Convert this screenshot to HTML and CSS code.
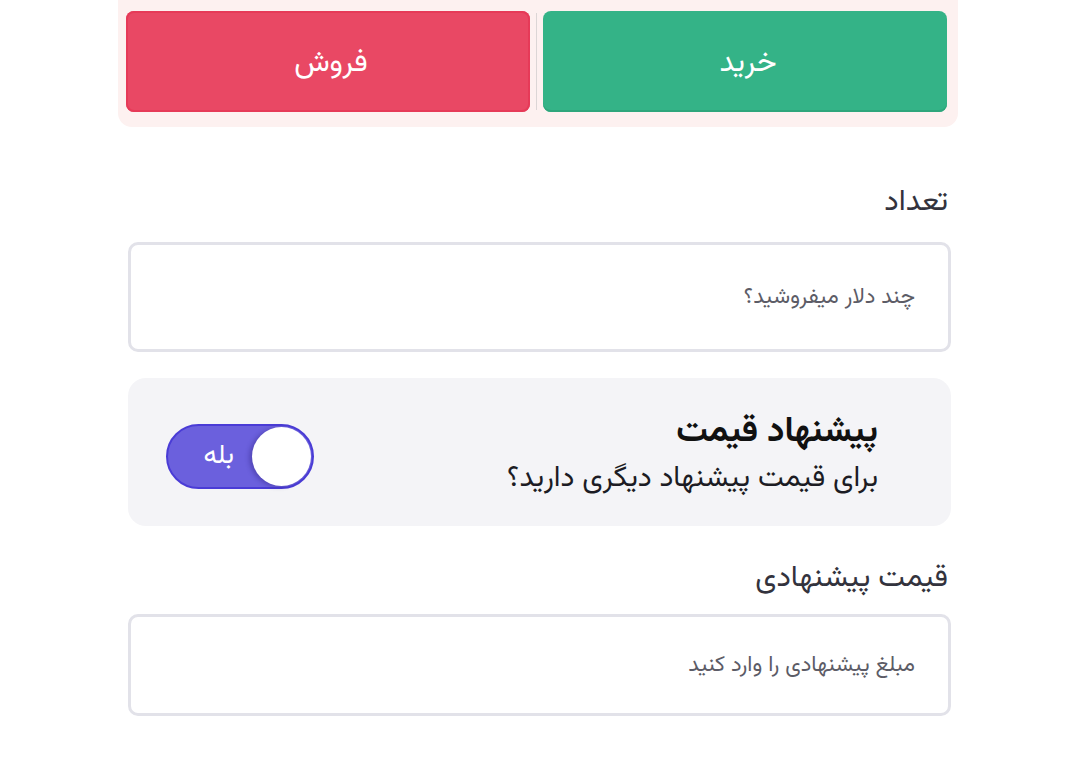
FILE: index.html
```html
<!DOCTYPE html>
<html lang="fa" dir="rtl">
<head>
<meta charset="UTF-8">
<meta name="viewport" content="width=device-width, initial-scale=1.0">
<title>سفارش دلار</title>
<link rel="stylesheet" href="styles.css">
</head>
<body>
<div class="order-page">
    <div class="trade-tabs">
        <button class="tab tab-buy">خرید</button>
        <span class="tab-divider"></span>
        <button class="tab tab-sell">فروش</button>
    </div>

    <form class="order-form">
        <label class="field-label" for="amount">تعداد</label>
        <input class="field-input" type="text" id="amount" placeholder="چند دلار میفروشید؟">

        <div class="offer-card">
            <div class="offer-text">
                <div class="offer-title">پیشنهاد قیمت</div>
                <div class="offer-desc">برای قیمت پیشنهاد دیگری دارید؟</div>
            </div>
            <div class="toggle">
                <span class="toggle-knob"></span>
                <span class="toggle-label">بله</span>
            </div>
        </div>

        <label class="field-label" for="price">قیمت پیشنهادی</label>
        <input class="field-input field-input-sm" type="text" id="price" placeholder="مبلغ پیشنهادی را وارد کنید">
    </form>
</div>
</body>
</html>
```

FILE: styles.css
```css
body {
    margin: 0;
    background-color: #fff;
    font-family: "Vazirmatn", "Noto Sans Arabic", "DejaVu Sans", sans-serif;
    color: #2a2a35;
}
.order-page {
    width: 840px;
    margin-right: 122px;
}
.trade-tabs {
    display: flex;
    align-items: stretch;
    gap: 6px;
    background-color: #fdf1f0;
    padding: 11px 11px 15px 8px;
    border-radius: 0 0 14px 14px;
}
.tab {
    flex: 1;
    height: 101px;
    padding: 3px 0 0 6px;
    border: none;
    border-radius: 8px;
    color: #fff;
    font-family: inherit;
    font-size: 30px;
}
.tab-buy {
    background-color: #34b387;
    box-shadow: inset 0 -2px 0 #2ea67c;
}
.tab-sell {
    background-color: #e94864;
    box-shadow: inset 0 0 0 2px #e63a58;
}
.tab-divider {
    width: 1px;
    margin: 2px 0;
    background-color: #dcd6d6;
}
.order-form {
    display: flex;
    flex-direction: column;
    width: 823px;
    margin-right: 7px;
}
.field-label {
    font-size: 30px;
    line-height: 40px;
    margin: 56px 3px 19px 0;
    color: #33333d;
}
.field-input {
    height: 110px;
    box-sizing: border-box;
    border: 3px solid #e2e2e9;
    border-radius: 10px;
    padding: 0 33px;
    font-family: inherit;
    font-size: 22px;
    color: #333;
    outline: none;
}
.field-input::placeholder {
    color: #5c5c66;
}
.field-input-sm {
    height: 102px;
}
.offer-card + .field-label {
    margin-top: 33px;
    margin-bottom: 15px;
}
.offer-card {
    display: flex;
    justify-content: space-between;
    align-items: center;
    margin-top: 26px;
    height: 148px;
    box-sizing: border-box;
    padding: 8px 73px 0 38px;
    background-color: #f4f4f7;
    border-radius: 18px;
}
.offer-title {
    font-size: 35px;
    font-weight: bold;
    color: #111;
    line-height: 46px;
}
.offer-desc {
    font-size: 29px;
    line-height: 46px;
    color: #1c1c24;
}
.toggle {
    position: relative;
    width: 148px;
    height: 65px;
    box-sizing: border-box;
    background-color: #6b60dd;
    border: 2px solid #4a3cd6;
    border-radius: 33px;
    display: flex;
    align-items: center;
}
.toggle-label {
    color: #fff;
    font-size: 27px;
    margin-right: 78px;
}
.toggle-knob {
    position: absolute;
    top: 1px;
    right: 1px;
    width: 59px;
    height: 59px;
    border-radius: 50%;
    background-color: #fff;
    box-shadow: -3px 1px 4px rgba(40, 30, 120, 0.35);
}
```
